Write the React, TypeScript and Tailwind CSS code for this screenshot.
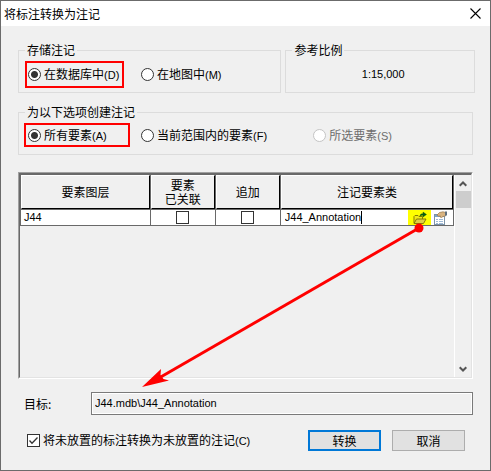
import React, { useState } from 'react';

const radioClass =
  "m-0 h-[13px] w-[13px] shrink-0 appearance-none rounded-full border border-[#333] bg-white checked:bg-[radial-gradient(circle,#333_0_3px,#fff_4px)] disabled:border-[#c4c4c4]";

const checkClass =
  "m-0 block h-[13px] w-[13px] shrink-0 appearance-none border border-[#333] bg-white";

const latinClass = "font-['Liberation_Sans',sans-serif] text-[11px]";

interface RadioProps {
  name: string;
  label: string;
  hotkey: string;
  checked: boolean;
  disabled?: boolean;
  className?: string;
  onSelect?: () => void;
}

const Radio: React.FC<RadioProps> = ({ name, label, hotkey, checked, disabled, className = '', onSelect }) => (
  <label className={`flex items-center gap-[3px] whitespace-nowrap ${disabled ? 'text-[#6d6d6d]' : ''} ${className}`}>
    <input type="radio" name={name} checked={checked} disabled={disabled} onChange={onSelect} className={radioClass} />
    <span>{label}<span className={latinClass}>({hotkey})</span></span>
  </label>
);

const HeaderCell: React.FC<{ children: React.ReactNode }> = ({ children }) => (
  <th scope="col" className="border-r border-b border-[#696969] p-0 font-normal">
    <div className="flex h-[34px] items-center justify-center border-t border-r border-b border-l border-t-white border-l-white border-r-black border-b-black text-center leading-[14px]">
      <span>{children}</span>
    </div>
  </th>
);

const FolderIcon = () => (
  <svg width="14" height="14" viewBox="0 0 14 14" aria-hidden="true">
    <path d="M1 12V5.5L2 4.5H5L6 5.5H9.5V8" fill="#f2e81a" stroke="#857c00" />
    <path d="M1 12.5L3.5 8H13L10.5 12.5Z" fill="#e0cf45" stroke="#857c00" />
    <path d="M7 4.5C7.5 3 8.500 2.800 10 2.800V1L13.500 3.500L10 6V4.200C9 4.200 8 4.300 7 5Z" fill="#0b5c12" stroke="#0b5c12" strokeWidth="0.4" />
  </svg>
);

const PropertiesIcon = () => (
  <svg width="14" height="14" viewBox="0 0 14 14" aria-hidden="true">
    <rect x="0.5" y="3.5" width="10" height="10" fill="#fff" stroke="#7d93a8" />
    <path d="M1 5H10" stroke="#7ba3cc" strokeWidth="2" />
    <path d="M2 8.5H4M5 8.5H9M2 10.5H4M5 10.5H9M2 12.5H4M5 12.5H9" stroke="#9db9d6" />
    <path d="M3 4L5.5 1.5L9 0.8L11.5 1.5V5L9 5.5L7.5 6.5L6 6L6.5 5L4 5.2Z" fill="#d9b481" stroke="#9a7a4d" strokeWidth="0.7" />
    <path d="M11 0.5H13V4.5H11Z" fill="#5f6f7c" />
  </svg>
);

export default function App() {
  const [storage, setStorage] = useState('db');
  const [scope, setScope] = useState('all');
  const [linked, setLinked] = useState(false);
  const [append, setAppend] = useState(false);
  const [annotation, setAnnotation] = useState('J44_Annotation');
  const [unplaced, setUnplaced] = useState(true);

  return (
    <div className="border border-[#6b6b6b] bg-[#f0f0f0] pb-[19px] font-['Noto_Sans_CJK_SC',sans-serif] text-[12px] leading-4 text-black">
      <header className="flex h-[25px] items-center justify-between bg-white pr-[9px] pl-[3px]">
        <h1>将标注转换为注记</h1>
        <button type="button" aria-label="关闭" className="p-0">
          <svg width="11" height="11" viewBox="0 0 11 11" aria-hidden="true">
            <path d="M0.5 0.5L10.5 10.5M10.5 0.5L0.5 10.5" stroke="#000" strokeWidth="1.1" />
          </svg>
        </button>
      </header>

      <main className="px-[17px] pt-4">
        <div className="-mr-[2px] grid grid-cols-[264fr_190fr] gap-1">
          <fieldset className="min-w-0 border border-[#dcdcdc] pb-[2px] pl-[6px]">
            <legend className="px-[2px]">存储注记</legend>
            <div className="flex h-8 items-center gap-[17px]">
              <Radio
                name="storage"
                label="在数据库中"
                hotkey="D"
                checked={storage === 'db'}
                onSelect={() => setStorage('db')}
                className="h-[27px] w-[99px] border-2 border-[#f00] pl-px"
              />
              <Radio name="storage" label="在地图中" hotkey="M" checked={storage === 'map'} onSelect={() => setStorage('map')} />
            </div>
          </fieldset>
          <fieldset className="min-w-0 border border-[#dcdcdc] pb-[2px]">
            <legend className="ml-[6px] px-[2px]">参考比例</legend>
            <p className={`flex h-8 items-center justify-center pl-[6px] ${latinClass}`}>1:15,000</p>
          </fieldset>
        </div>

        <fieldset className="mt-[11px] min-w-0 border border-[#dcdcdc] pb-1 pl-[5px]">
          <legend className="ml-px px-[2px]">为以下选项创建注记</legend>
          <div className="flex h-[30px] items-center pr-20">
            <Radio
              name="scope"
              label="所有要素"
              hotkey="A"
              checked={scope === 'all'}
              onSelect={() => setScope('all')}
              className="mr-[11px] h-6 w-[106px] border-2 border-[#f00] pl-[2px]"
            />
            <Radio name="scope" label="当前范围内的要素" hotkey="F" checked={scope === 'extent'} onSelect={() => setScope('extent')} />
            <Radio name="scope" label="所选要素" hotkey="S" checked={false} disabled className="ml-auto" />
          </div>
        </fieldset>

        <section className="relative mt-[17px] border border-t-[#a0a0a0] border-r-white border-b-white border-l-[#a0a0a0]">
          <div className="flex h-[205px] border-t-2 border-r border-b border-l border-t-[#696969] border-r-[#e3e3e3] border-b-[#e3e3e3] border-l-[#696969]">
            <div className="min-w-0 flex-1">
              <table className="w-full table-fixed border-separate border-spacing-0 border-l border-[#696969]">
                <colgroup>
                  <col className="w-[30%]" />
                  <col className="w-[15%]" />
                  <col className="w-[15%]" />
                  <col className="w-[40%]" />
                </colgroup>
                <thead>
                  <tr>
                    <HeaderCell>要素图层</HeaderCell>
                    <HeaderCell>要素<br />已关联</HeaderCell>
                    <HeaderCell>追加</HeaderCell>
                    <HeaderCell>注记要素类</HeaderCell>
                  </tr>
                </thead>
                <tbody className="bg-white">
                  <tr>
                    <td className={`h-4 border-r border-b border-[#696969] p-0 pl-[3px] leading-[15px] ${latinClass}`}>J44</td>
                    <td className="border-r border-b border-[#696969] p-0">
                      <div className="flex justify-center">
                        <input type="checkbox" aria-label="已关联" checked={linked} onChange={e => setLinked(e.target.checked)} className={`${checkClass} checked:bg-[#333]`} />
                      </div>
                    </td>
                    <td className="border-r border-b border-[#696969] p-0">
                      <div className="flex justify-center">
                        <input type="checkbox" aria-label="追加" checked={append} onChange={e => setAppend(e.target.checked)} className={`${checkClass} checked:bg-[#333]`} />
                      </div>
                    </td>
                    <td className="border-r border-b border-[#696969] p-0">
                      <div className="flex h-[15px] items-center pr-[5px] pl-1">
                        <input
                          type="text"
                          aria-label="注记要素类"
                          value={annotation}
                          onChange={e => setAnnotation(e.target.value)}
                          className={`h-[15px] max-w-[100px] bg-transparent p-0 leading-[15px] outline-none [field-sizing:content] ${latinClass}`}
                        />
                        <span className="h-[13px] w-px bg-black" />
                        <button type="button" aria-label="浏览" className="ml-auto flex h-[15px] w-[23px] items-center justify-center bg-[#ff0]">
                          <FolderIcon />
                        </button>
                        <button type="button" aria-label="属性" className="ml-[3px] flex h-[15px] items-center">
                          <PropertiesIcon />
                        </button>
                      </div>
                    </td>
                  </tr>
                </tbody>
              </table>
            </div>
            <div className="flex w-[17px] flex-col items-center border-l border-white pt-px">
              <button type="button" aria-label="向上滚动" className="flex h-[15px] w-full items-center justify-center">
                <svg width="8" height="6" viewBox="0 0 8 6" aria-hidden="true">
                  <path d="M0.7 4.8L4 1.5L7.3 4.8" fill="none" stroke="#555" strokeWidth="2" />
                </svg>
              </button>
              <div className="h-[17px] w-[15px] bg-[#cdcdcd]" />
              <button type="button" aria-label="向下滚动" className="mt-auto flex h-[17px] w-full items-center justify-center">
                <svg width="8" height="6" viewBox="0 0 8 6" aria-hidden="true">
                  <path d="M0.7 1.2L4 4.5L7.3 1.2" fill="none" stroke="#555" strokeWidth="2" />
                </svg>
              </button>
            </div>
          </div>

          {/* callout from the browse button down to the target path */}
          <svg className="pointer-events-none absolute top-[49px] right-[47px]" width="284" height="168" viewBox="0 0 284 168" aria-hidden="true">
            <path d="M278 6L18 156" stroke="#f00" strokeWidth="3" />
            <circle cx="278" cy="6" r="4.5" fill="#f00" />
            <path d="M1 165L20 147L19.500 153L22.500 157L28 158.500Z" fill="#f00" />
          </svg>
        </section>

        <div className="mt-[13px] flex items-center">
          <label htmlFor="target" className="w-[73px] pl-[6px]">目标:</label>
          <input
            id="target"
            type="text"
            readOnly
            value="J44.mdb\J44_Annotation"
            className={`h-[23px] min-w-0 flex-1 border border-[#7a7a7a] bg-[#f0f0f0] px-[3px] pb-[2px] leading-4 shadow-[inset_0_0_0_1px_#fff] outline-none ${latinClass}`}
          />
        </div>

        <div className="mt-[15px] flex items-center pr-2 pl-[9px]">
          <label className="flex items-center gap-[3px] whitespace-nowrap">
            <span className="relative">
              <input type="checkbox" checked={unplaced} onChange={e => setUnplaced(e.target.checked)} className={checkClass} />
              {unplaced && (
                <svg className="pointer-events-none absolute top-0 left-0" width="13" height="13" viewBox="0 0 13 13" aria-hidden="true">
                  <path d="M2.500 6.500L5 9.200L10.500 3.500" fill="none" stroke="#333" strokeWidth="1.3" />
                </svg>
              )}
            </span>
            <span>将未放置的标注转换为未放置的注记<span className={latinClass}>(C)</span></span>
          </label>
          <div className="ml-auto flex gap-[11px]">
            <button type="button" className="h-[21px] w-[73px] border-2 border-[#0078d7] bg-[#e1e1e1] leading-4">转换</button>
            <button type="button" className="h-[21px] w-[73px] border border-[#adadad] bg-[#e1e1e1] leading-4">取消</button>
          </div>
        </div>
      </main>
    </div>
  );
}
